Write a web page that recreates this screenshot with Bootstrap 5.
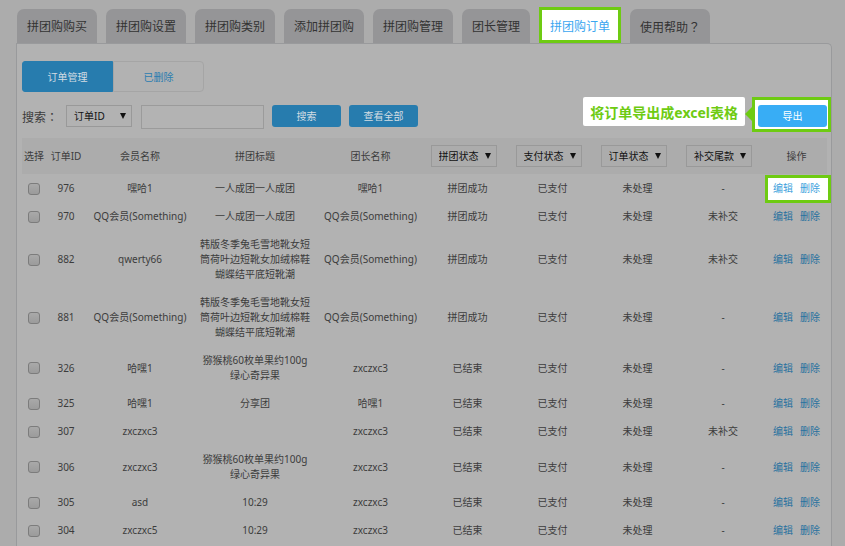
<!DOCTYPE html>
<html>
<head>
<meta charset="utf-8">
<meta name="viewport" content="width=device-width, initial-scale=1">
<title>拼团购订单</title>
<link href="https://cdn.jsdelivr.net/npm/bootstrap@5.3.0/dist/css/bootstrap.min.css" rel="stylesheet">
<style>
  :root { --green: #6ecb12; --blue: #277cae; --line: #999a9c; }
  body {
    font-family: "Noto Sans", "Noto Sans CJK SC", sans-serif;
    font-size: 10px; line-height: 15px; color: #3c3c3c; background: #acacac;
  }
  .wide-mark { font-family: "Noto Sans CJK TC", sans-serif; }
  .main-tabs { padding: 7px 12px 0 17px; gap: 9px; }
  .main-tabs .nav-link {
    height: 34px; padding: 0 10px; font-size: 12px; line-height: 36px;
    color: #333; background: #959597; border: 0; border-radius: 7px 7px 0 0;
  }
  .main-tabs .nav-link.active {
    height: 36px; padding: 0 8px; line-height: 34px; color: #3ba6f0;
    background: #fff; border: 3px solid var(--green); border-radius: 0;
  }
  .panel {
    margin: 0 13px 0 16px; padding: 17px 4px 0 5px; background: #b2b2b2;
    border: 1px solid var(--line); border-width: 1px 1px 0; border-radius: 0 5px 0 0;
  }
  .sub-tabs .btn {
    width: 91px; height: 31px; padding: 0; font-size: 10px; line-height: 30px;
    color: #2a7db0; border: 1px solid #a5a5a5; border-radius: 0 4px 4px 0;
  }
  .sub-tabs .btn.active {
    color: #d3dde3; background: var(--blue); border-color: var(--blue); border-radius: 3px 0 0 3px;
  }
  .search-row { margin-top: 5px; height: 35px; padding-top: 8px; }
  .search-row label { width: 44px; font-size: 12px; line-height: 24px; }
  .pick {
    width: 66px; height: 22px; padding: 0 0 0 7px; font-size: 10px; line-height: 20px;
    color: #111; border: 1px solid #999; border-radius: 0; appearance: none;
    background: url("data:image/svg+xml,%3Csvg xmlns='http://www.w3.org/2000/svg' viewBox='0 0 6 6'%3E%3Cpath d='M0 0h6L3 6z' fill='%23111'/%3E%3C/svg%3E") no-repeat right 5px top 7px / 6px 6px;
  }
  .word { width: 123px; height: 24px; margin: 0 8px 0 9px; padding: 0 6px; font-size: 10px; background: #b3b3b3; border: 1px solid #9b9b9b; border-radius: 0; }
  .act {
    width: 69px; height: 22px; padding: 0; font-size: 10px; line-height: 20px;
    color: #d3dde3; background: var(--blue); border: 0; border-radius: 3px;
  }
  .act + .act { margin-left: 8px; }
  .callout-row { margin: -8px -4px 0 auto; }
  .tip {
    position: relative; height: 29px; margin-right: 7px; padding: 0 7px; font-size: 14px; line-height: 32px;
    font-weight: 700; color: var(--green); background: #fff; border-radius: 2px;
  }
  .tip::after {
    content: ""; position: absolute; left: 100%; top: 9px;
    border: solid transparent; border-width: 8px 8px 8px 0; border-right-color: var(--green);
  }
  .framed { height: 35px; padding: 5px 1px 5px 3px; background: #fff; border: 3px solid var(--green); }
  .framed .act { color: #fff; background: #38adf5; }
  .orders { margin: 6px 0 0; table-layout: fixed; color: inherit; text-align: center; }
  .orders th, .orders td { padding: 7px 3px 6px; vertical-align: middle; font-weight: 400; }
  .orders td:nth-child(3), .orders td:nth-child(5) { padding-left: 0; padding-right: 0; }
  .orders th { height: 36px; padding: 0; background: #acacac; }
  .orders th.has-pick { padding-right: 8px; }
  .orders td:last-child { padding-left: 0; padding-right: 0; }
  .orders input {
    display: block; width: 12px; height: 12px; margin: 0 auto; appearance: none;
    border: 1px solid #7c7c7c; border-radius: 3px; background: linear-gradient(#a9a9a9, #9b9b9b);
  }
  .orders input:checked { background: var(--blue); }
  .ops { display: flex; justify-content: center; gap: 7px; position: relative; }
  .ops a { color: #28719f; text-decoration: none; position: relative; }
  .ops.lit a { color: #3d9fdc; }
  .ops.lit::before {
    content: ""; position: absolute; inset: -6px -4px -7px -1px;
    background: #fff; border: 3px solid var(--green);
  }
</style>
<script src="https://cdn.jsdelivr.net/npm/bootstrap@5.3.0/dist/js/bootstrap.bundle.min.js"></script>
</head>
<body class="d-flex flex-column min-vh-100">
<nav class="nav main-tabs flex-nowrap align-items-end text-nowrap">
  <a class="nav-link" href="#">拼团购购买</a>
  <a class="nav-link" href="#">拼团购设置</a>
  <a class="nav-link" href="#">拼团购类别</a>
  <a class="nav-link" href="#">添加拼团购</a>
  <a class="nav-link" href="#">拼团购管理</a>
  <a class="nav-link" href="#">团长管理</a>
  <a class="nav-link active" aria-current="page" href="#">拼团购订单</a>
  <a class="nav-link" href="#">使用帮助<span class="wide-mark">？</span></a>
</nav>
<main class="panel flex-grow-1">
  <div class="sub-tabs d-flex">
    <a class="btn active" href="#">订单管理</a>
    <a class="btn" href="#">已删除</a>
  </div>
  <form class="search-row d-flex align-items-start text-nowrap">
    <label for="field">搜索<span class="wide-mark">：</span></label>
    <select class="pick" id="field"><option>订单ID</option></select>
    <input class="word" type="text" aria-label="搜索内容">
    <button class="btn act" type="button">搜索</button>
    <button class="btn act" type="button">查看全部</button>
    <div class="callout-row d-flex align-items-start">
      <div class="tip">将订单导出成excel表格</div>
      <div class="framed d-flex"><button class="btn act" type="button">导出</button></div>
    </div>
  </form>
  <table class="orders w-100">
    <colgroup>
      <col style="width:24px"><col style="width:40px"><col style="width:108px"><col style="width:122px"><col style="width:109px">
      <col style="width:85px"><col style="width:85px"><col style="width:85px"><col style="width:86px"><col style="width:61px">
    </colgroup>
    <thead>
      <tr>
        <th>选择</th><th>订单ID</th><th>会员名称</th><th>拼团标题</th><th>团长名称</th>
        <th class="has-pick"><select class="pick" aria-label="拼团状态"><option>拼团状态</option></select></th>
        <th class="has-pick"><select class="pick" aria-label="支付状态"><option>支付状态</option></select></th>
        <th class="has-pick"><select class="pick" aria-label="订单状态"><option>订单状态</option></select></th>
        <th class="has-pick"><select class="pick" aria-label="补交尾款"><option>补交尾款</option></select></th>
        <th>操作</th>
      </tr>
    </thead>
    <tbody>
      <tr><td><input type="checkbox" aria-label="976"></td><td>976</td><td>嘿哈1</td><td>一人成团一人成团</td><td>嘿哈1</td><td>拼团成功</td><td>已支付</td><td>未处理</td><td>-</td><td><span class="ops lit"><a href="#">编辑</a><a href="#">删除</a></span></td></tr>
      <tr><td><input type="checkbox" aria-label="970"></td><td>970</td><td>QQ会员(Something)</td><td>一人成团一人成团</td><td>QQ会员(Something)</td><td>拼团成功</td><td>已支付</td><td>未处理</td><td>未补交</td><td><span class="ops"><a href="#">编辑</a><a href="#">删除</a></span></td></tr>
      <tr><td><input type="checkbox" aria-label="882"></td><td>882</td><td>qwerty66</td><td>韩版冬季兔毛雪地靴女短筒荷叶边短靴女加绒棉鞋蝴蝶结平底短靴潮</td><td>QQ会员(Something)</td><td>拼团成功</td><td>已支付</td><td>未处理</td><td>未补交</td><td><span class="ops"><a href="#">编辑</a><a href="#">删除</a></span></td></tr>
      <tr><td><input type="checkbox" aria-label="881"></td><td>881</td><td>QQ会员(Something)</td><td>韩版冬季兔毛雪地靴女短筒荷叶边短靴女加绒棉鞋蝴蝶结平底短靴潮</td><td>QQ会员(Something)</td><td>拼团成功</td><td>已支付</td><td>未处理</td><td>-</td><td><span class="ops"><a href="#">编辑</a><a href="#">删除</a></span></td></tr>
      <tr><td><input type="checkbox" aria-label="326"></td><td>326</td><td>哈嘿1</td><td>猕猴桃60枚单果约100g<br>绿心奇异果</td><td>zxczxc3</td><td>已结束</td><td>已支付</td><td>未处理</td><td>-</td><td><span class="ops"><a href="#">编辑</a><a href="#">删除</a></span></td></tr>
      <tr><td><input type="checkbox" aria-label="325"></td><td>325</td><td>哈嘿1</td><td>分享团</td><td>哈嘿1</td><td>已结束</td><td>已支付</td><td>未处理</td><td>-</td><td><span class="ops"><a href="#">编辑</a><a href="#">删除</a></span></td></tr>
      <tr><td><input type="checkbox" aria-label="307"></td><td>307</td><td>zxczxc3</td><td></td><td>zxczxc3</td><td>已结束</td><td>已支付</td><td>未处理</td><td>未补交</td><td><span class="ops"><a href="#">编辑</a><a href="#">删除</a></span></td></tr>
      <tr><td><input type="checkbox" aria-label="306"></td><td>306</td><td>zxczxc3</td><td>猕猴桃60枚单果约100g<br>绿心奇异果</td><td>zxczxc3</td><td>已结束</td><td>已支付</td><td>未处理</td><td>-</td><td><span class="ops"><a href="#">编辑</a><a href="#">删除</a></span></td></tr>
      <tr><td><input type="checkbox" aria-label="305"></td><td>305</td><td>asd</td><td>10:29</td><td>zxczxc3</td><td>已结束</td><td>已支付</td><td>未处理</td><td>-</td><td><span class="ops"><a href="#">编辑</a><a href="#">删除</a></span></td></tr>
      <tr><td><input type="checkbox" aria-label="304"></td><td>304</td><td>zxczxc5</td><td>10:29</td><td>zxczxc3</td><td>已结束</td><td>已支付</td><td>未处理</td><td>-</td><td><span class="ops"><a href="#">编辑</a><a href="#">删除</a></span></td></tr>
    </tbody>
  </table>
</main>
</body>
</html>
